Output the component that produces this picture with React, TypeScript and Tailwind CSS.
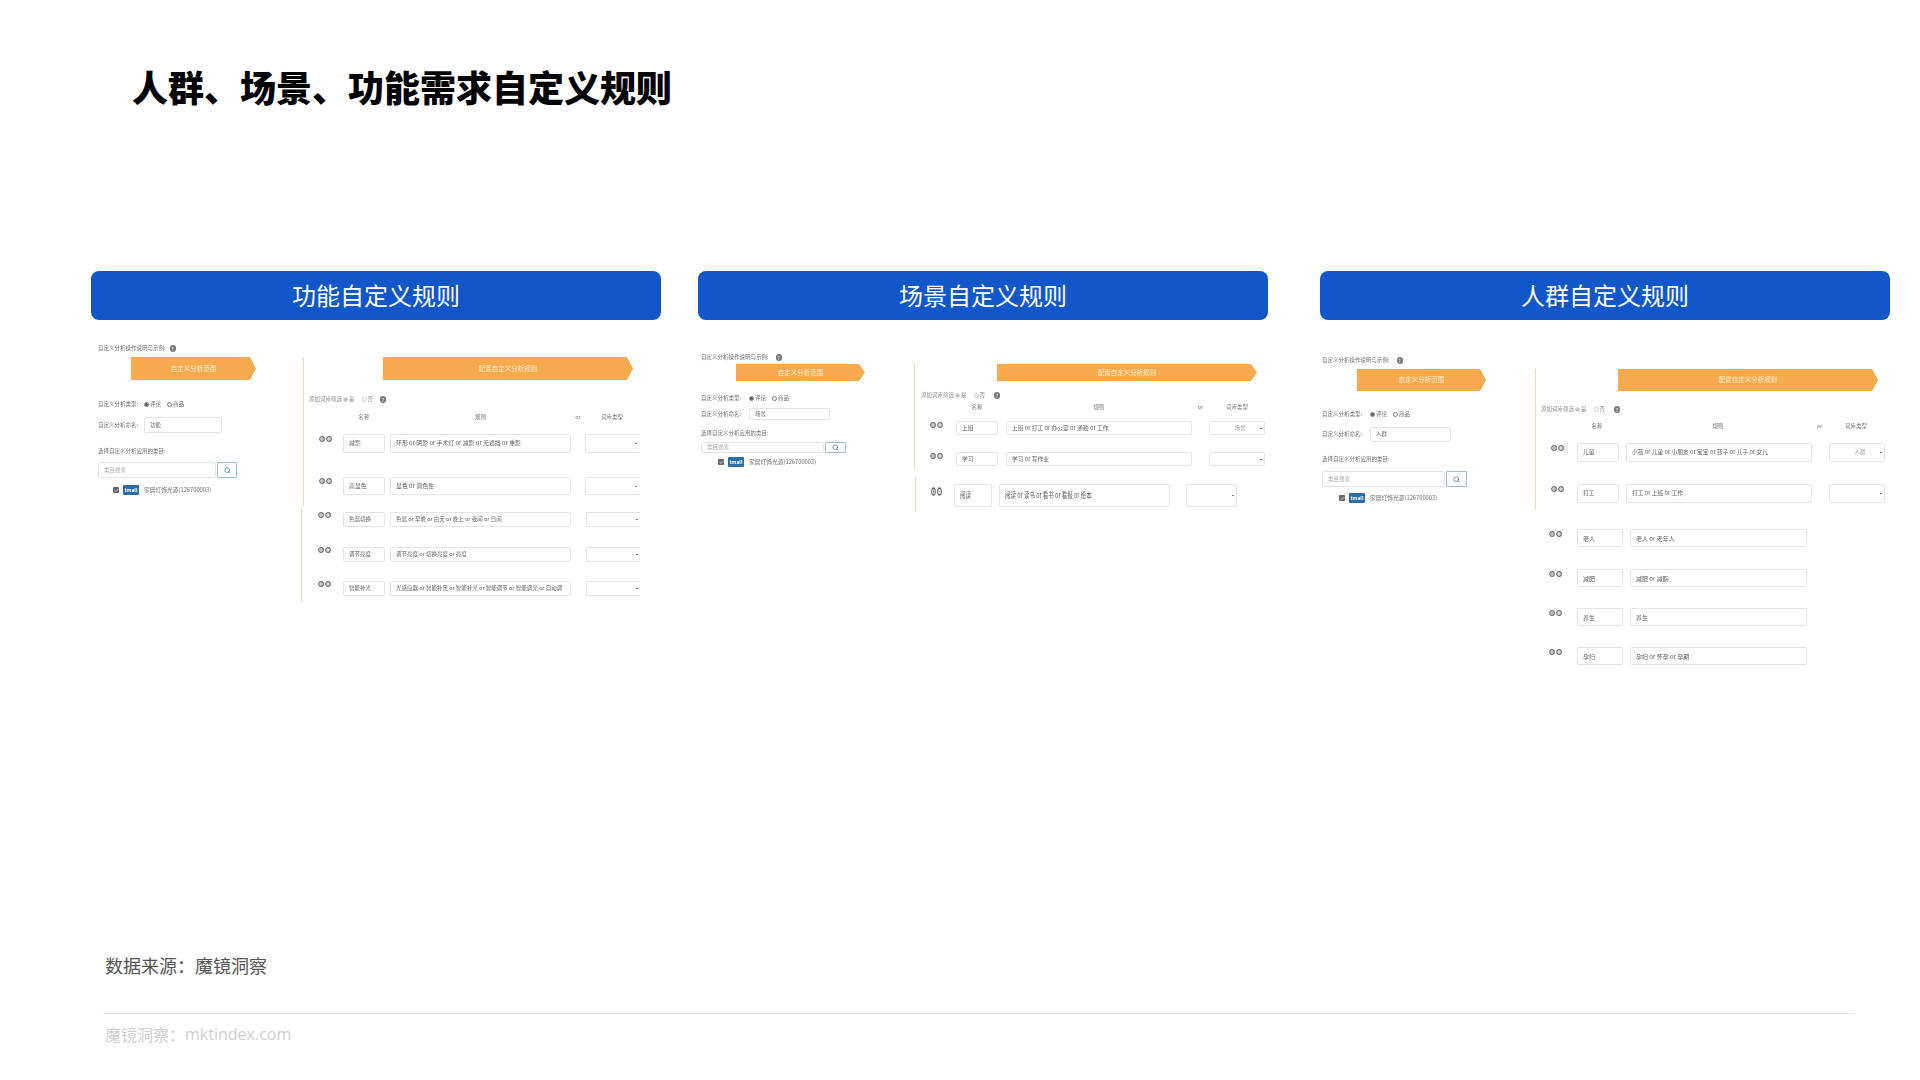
import { Check, Search } from "lucide-react";
import clsx from "clsx";

const CJK = "font-['Noto_Sans_CJK_SC',sans-serif]";

interface RowSizes {
  row: string;
  icons: string;
  name: string;
  rule: string;
  select?: string;
  text: string;
  iconSize?: string;
}

interface RuleRowProps extends RowSizes {
  nameText: string;
  ruleText: string;
  value?: string;
}

function CircleButton({ minus, size }: { minus?: boolean; size: string }) {
  return (
    <svg viewBox="0 0 12 12" preserveAspectRatio="none" className={clsx("block shrink-0", size)}>
      <circle cx="6" cy="6" r="4.6" fill="#fff" stroke="#6e6e6e" strokeWidth="2.4" />
      <path d={minus ? "M3.5 6h5" : "M3.5 6h5M6 3.5v5"} stroke="#888" strokeWidth="1.2" />
    </svg>
  );
}

function Help({ className }: { className?: string }) {
  return (
    <span
      className={clsx(
        "flex h-[7px] w-[6px] shrink-0 items-center justify-center rounded-full bg-[#7a7a7a] text-[5px] leading-none text-white",
        className,
      )}
    >
      ?
    </span>
  );
}

function Radio({ on, light }: { on?: boolean; light?: boolean }) {
  return (
    <span
      className={clsx(
        "flex h-[5px] w-[5px] shrink-0 items-center justify-center rounded-full border-[0.75px]",
        light ? "border-[#ccc]" : "border-[#777]",
      )}
    >
      {on && <span className={clsx("h-[3px] w-[3px] rounded-full", light ? "bg-[#bbb]" : "bg-[#555]")} />}
    </span>
  );
}

function Arrow({ text, className }: { text: string; className: string }) {
  return (
    <div
      className={clsx(
        "flex items-center justify-center bg-[#f6a94d] text-[6.5px] text-[#fdeacf] [clip-path:polygon(0_0,calc(100%-6px)_0,100%_50%,calc(100%-6px)_100%,0_100%)]",
        className,
      )}
    >
      {text}
    </div>
  );
}

function Box({ className, children }: { className: string; children?: React.ReactNode }) {
  return (
    <div
      className={clsx(
        "flex h-full shrink-0 items-center overflow-hidden rounded-[2px] border-[0.75px] border-[#e4e4e4] pl-[5px] whitespace-nowrap",
        className,
      )}
    >
      {children}
    </div>
  );
}

function RuleRow({ row, icons, name, rule, select, text, iconSize, nameText, ruleText, value }: RuleRowProps) {
  return (
    <div className={clsx("flex text-[#5c5c5c]", row)}>
      <div className={clsx("flex shrink-0 gap-[1px]", icons)}>
        <CircleButton size={iconSize ?? "h-[6px] w-[6px]"} />
        <CircleButton size={iconSize ?? "h-[6px] w-[6px]"} minus />
      </div>
      <Box className={name}>
        <span className={clsx("inline-block", text)}>{nameText}</span>
      </Box>
      <Box className={rule}>
        <span className={clsx("inline-block", text)}>{ruleText}</span>
      </Box>
      {select && (
        <Box className={clsx("justify-between pr-[2px] text-[5.5px]", select)}>
          <span className="w-[2px]" />
          <span className="pl-[3px] text-[#999]">{value}</span>
          <span className="h-[1px] w-[2px] bg-[#777]" />
        </Box>
      )}
    </div>
  );
}

function FilterRow({ className, help }: { className: string; help: string }) {
  return (
    <div className={clsx("flex h-[12px] items-center text-[5.5px] text-[#8c8c8c]", className)}>
      <span>添加词库筛选</span>
      <span className="ml-[1px]">
        <Radio on light />
      </span>
      <span className="ml-[1px]">是</span>
      <span className="ml-[7px]">
        <Radio light />
      </span>
      <span className="ml-[1px]">否</span>
      <Help className={help} />
    </div>
  );
}

function ColumnHeads({ className, cols }: { className?: string; cols: string[] }) {
  const labels = ["名称", "规则", "or", "词库类型"];
  return (
    <div className={clsx("flex h-[12px] items-center text-[5.5px] text-[#777]", className)}>
      {labels.map((label, i) => (
        <span key={label} className={clsx("shrink-0 text-center", cols[i])}>
          {label}
        </span>
      ))}
    </div>
  );
}

interface ScopeProps {
  width: string;
  labelW: string;
  name: string;
  arrow: string;
  help: string;
  typeRow: string;
  nameRow: string;
  nameInput: string;
  catRow: string;
  searchRow: string;
  search: string;
  button: string;
  checkRow: string;
}

function ScopeForm(p: ScopeProps) {
  return (
    <div className={clsx("shrink-0 text-[5.5px] text-[#6e6e6e]", p.width)}>
      <div className="flex h-[12px] items-center">
        <span>自定义分析操作说明与示例:</span>
        <Help className={p.help} />
      </div>
      <Arrow text="自定义分析范围" className={p.arrow} />
      <div className={clsx("flex h-[12px] items-center", p.typeRow)}>
        <span className={clsx("shrink-0", p.labelW)}>自定义分析类型:</span>
        <Radio on />
        <span className="ml-[1px] w-[17px]">评论</span>
        <Radio />
        <span className="ml-[1px]">商品</span>
      </div>
      <div className={clsx("flex items-center", p.nameRow)}>
        <span className={clsx("shrink-0", p.labelW)}>自定义分析命名:</span>
        <Box className={p.nameInput}>{p.name}</Box>
      </div>
      <div className={clsx("flex h-[12px] items-center", p.catRow)}>选择自定义分析应用的类目:</div>
      <div className={clsx("flex gap-[1px]", p.searchRow)}>
        <Box className={clsx("text-[#aaa]", p.search)}>类目搜索</Box>
        <div
          className={clsx(
            "flex h-full items-center justify-center rounded-[1px] border-[0.75px] border-[#9dbfcb] text-[#44707f]",
            p.button,
          )}
        >
          <Search size={7} strokeWidth={2.4} />
        </div>
      </div>
      <div className={clsx("flex items-center", p.checkRow)}>
        <span className="flex h-[6px] w-[6px] shrink-0 items-center justify-center rounded-[1px] bg-[#666]">
          <Check size={5} strokeWidth={3} className="text-white" />
        </span>
        <span className="ml-[4px] flex h-full w-[16px] shrink-0 items-center justify-center rounded-[1px] bg-[#2a6ea8] text-[5px] font-bold text-white">
          tmall
        </span>
        <span className="ml-[5px] text-[5.75px] whitespace-nowrap">家居灯饰光源(126700003)</span>
      </div>
    </div>
  );
}

function FeaturePanel() {
  const upper = {
    icons: "ml-[16px]",
    name: "ml-[11px] w-[42px]",
    rule: "ml-[5px] w-[181px]",
    select: "ml-[14px] w-[54px] border-r-0 rounded-r-none",
    text: "text-[5.9px]",
  };
  const lower = {
    icons: "ml-[16px]",
    name: "ml-[12px] w-[42px]",
    rule: "ml-[5px] w-[181px]",
    select: "ml-[15px] w-[54px] border-r-0 rounded-r-none",
    text: "text-[5.5px]",
  };
  return (
    <div className="flex pl-[7px] pt-[22px] blur-[0.3px]">
      <ScopeForm
        width="w-[205px]"
        labelW="w-[46px]"
        name="功能"
        help="ml-[4px]"
        arrow="ml-[33px] mt-[3px] h-[23px] w-[125px]"
        typeRow="mt-[18px]"
        nameRow="mt-[7px] h-[16px]"
        nameInput="w-[78px]"
        catRow="mt-[12px]"
        searchRow="mt-[5px] h-[16px]"
        search="w-[118px]"
        button="w-[20px]"
        checkRow="mt-[7px] h-[10px] pl-[15px]"
      />
      <div className="mt-[15px]">
        <div className="border-l-[1.5px] border-[#f5d9ae] pb-[11px]">
          <Arrow text="配置自定义分析规则" className="ml-[79px] h-[23px] w-[250px]" />
          <FilterRow className="ml-[5px] mt-[13px]" help="ml-[7px]" />
          <ColumnHeads
            className="mt-[6px]"
            cols={["ml-[39px] w-[42px]", "ml-[5px] w-[181px]", "w-[14px]", "w-[54px]"]}
          />
          <RuleRow
            {...upper}
            row="mt-[11px] h-[19px]"
            icons="ml-[15px] mt-[2px]"
            nameText="减影"
            ruleText="环形 or 阴影 or 手术灯 or 减影 or 无遮挡 or 重影"
          />
          <RuleRow
            {...upper}
            row="mt-[24px] h-[18px]"
            icons="ml-[15px] mt-[1px]"
            nameText="高显色"
            ruleText="显色 or 调色性"
          />
        </div>
        <div className="-ml-[2px] mt-[2px] border-l-[1.5px] border-[#f5d9ae] pb-[6px] pt-[4px]">
          <RuleRow {...lower} row="h-[15px]" nameText="色温切换" ruleText="色温 or 早晚 or 白天 or 晚上 or 夜间 or 日间" />
          <RuleRow {...lower} row="mt-[20px] h-[15px]" nameText="调节亮度" ruleText="调节亮度 or 切换亮度 or 亮度" />
          <RuleRow
            {...lower}
            row="mt-[19px] h-[15px]"
            nameText="智能补光"
            ruleText="光感应器 or 智能补足 or 智能补光 or 智能调节 or 智能调光 or 自动调"
          />
        </div>
      </div>
    </div>
  );
}

function ScenePanel() {
  const upper = {
    icons: "ml-[16px]",
    name: "ml-[13px] w-[42px]",
    rule: "ml-[8px] w-[186px]",
    select: "ml-[17px] w-[56px]",
    text: "text-[5.75px]",
  };
  return (
    <div className="flex pl-[3px] pt-[31px] blur-[0.3px]">
      <ScopeForm
        width="w-[213px]"
        labelW="w-[48px]"
        name="场景"
        help="ml-[7px]"
        arrow="ml-[35px] mt-[1px] h-[17px] w-[129px]"
        typeRow="mt-[11px]"
        nameRow="mt-[4px] h-[12px]"
        nameInput="w-[81px]"
        catRow="mt-[7px]"
        searchRow="mt-[3px] h-[11px]"
        search="w-[123px]"
        button="w-[21px]"
        checkRow="mt-[4px] h-[10px] pl-[17px]"
      />
      <div className="mt-[13px]">
        <div className="border-l-[1.5px] border-[#f5d9ae] pb-[4px]">
          <Arrow text="配置自定义分析规则" className="ml-[82px] h-[17px] w-[260px]" />
          <FilterRow className="ml-[6px] mt-[8px]" help="ml-[9px]" />
          <ColumnHeads cols={["ml-[41px] w-[42px]", "ml-[8px] w-[186px]", "w-[17px]", "w-[56px]"]} />
          <RuleRow
            {...upper}
            row="mt-[8px] h-[14px]"
            icons="ml-[15px] mt-[1px]"
            nameText="上班"
            ruleText="上班 or 打工 or 办公室 or 通勤 or 工作"
            value="场景"
          />
          <RuleRow
            {...upper}
            row="mt-[17px] h-[14px]"
            icons="ml-[15px] mt-[1px]"
            nameText="学习"
            ruleText="学习 or 写作业"
          />
        </div>
        <div className="ml-[1px] mt-[7px] border-l-[1.5px] border-[#ecd3a8] pb-[5px] pt-[7px]">
          <RuleRow
            row="h-[23px]"
            icons="ml-[15px] mt-[3px]"
            iconSize="h-[9px] w-[5px]"
            name="ml-[12px] w-[38px]"
            rule="ml-[7px] w-[171px]"
            select="ml-[16px] w-[51px]"
            text="text-[5.5px] scale-y-150"
            nameText="阅读"
            ruleText="阅读 or 读书 or 看书 or 看报 or 绘本"
          />
        </div>
      </div>
    </div>
  );
}

function AudiencePanel() {
  const upper = {
    icons: "ml-[15px]",
    name: "ml-[13px] w-[42px]",
    rule: "ml-[7px] w-[186px]",
    select: "ml-[17px] w-[56px]",
    text: "text-[5.75px]",
  };
  const lower = {
    icons: "ml-[14px] mt-[2px]",
    name: "ml-[15px] w-[46px]",
    rule: "ml-[7px] w-[177px]",
    text: "text-[6px]",
  };
  return (
    <div className="flex pl-[2px] pt-[34px] blur-[0.3px]">
      <ScopeForm
        width="w-[213px]"
        labelW="w-[48px]"
        name="人群"
        help="ml-[7px]"
        arrow="ml-[35px] mt-[3px] h-[22px] w-[129px]"
        typeRow="mt-[17px]"
        nameRow="mt-[7px] h-[15px]"
        nameInput="w-[81px]"
        catRow="mt-[11px]"
        searchRow="mt-[6px] h-[16px]"
        search="w-[123px]"
        button="w-[21px]"
        checkRow="mt-[6px] h-[10px] pl-[17px]"
      />
      <div className="mt-[15px]">
        <div className="border-l-[1.5px] border-[#f5d9ae] pb-[7px]">
          <Arrow text="配置自定义分析规则" className="ml-[82px] h-[22px] w-[260px]" />
          <FilterRow className="ml-[5px] mt-[12px]" help="ml-[9px]" />
          <ColumnHeads
            className="mt-[5px]"
            cols={["ml-[40px] w-[42px]", "ml-[7px] w-[186px]", "w-[17px]", "w-[56px]"]}
          />
          <RuleRow
            {...upper}
            row="mt-[11px] h-[19px]"
            icons="ml-[15px] mt-[2px]"
            nameText="儿童"
            ruleText="小孩 or 儿童 or 小朋友 or 宝宝 or 孩子 or 儿子 or 女儿"
            value="人群"
          />
          <RuleRow
            {...upper}
            row="mt-[22px] h-[19px]"
            icons="ml-[15px] mt-[2px]"
            nameText="打工"
            ruleText="打工 or 上班 or 工作"
          />
        </div>
        <RuleRow {...lower} row="mt-[19px] h-[18px]" nameText="老人" ruleText="老人 or 老年人" />
        <RuleRow {...lower} row="mt-[22px] h-[18px]" nameText="减肥" ruleText="减肥 or 减脂" />
        <RuleRow {...lower} row="mt-[21px] h-[18px]" nameText="养生" ruleText="养生" />
        <RuleRow {...lower} row="mt-[21px] h-[18px]" nameText="孕妇" ruleText="孕妇 or 怀孕 or 孕期" />
      </div>
    </div>
  );
}

function ColumnTitle({ children }: { children: React.ReactNode }) {
  return (
    <div className="flex h-[49px] items-center justify-center rounded-[8px] bg-[#1257c9] pb-[2px] text-[24px] text-white">
      {children}
    </div>
  );
}

export default function App() {
  return (
    <div className={clsx("flex h-[1080px] w-[1920px] flex-col overflow-hidden bg-white", CJK)}>
      <h1 className="pl-[132px] pt-[64px] text-[36px] leading-[44px] font-black text-black">
        人群、场景、功能需求自定义规则
      </h1>
      <div className="ml-[91px] mt-[163px] flex">
        <div className="w-[570px]">
          <ColumnTitle>功能自定义规则</ColumnTitle>
          <FeaturePanel />
        </div>
        <div className="ml-[37px] w-[570px]">
          <ColumnTitle>场景自定义规则</ColumnTitle>
          <ScenePanel />
        </div>
        <div className="ml-[52px] w-[570px]">
          <ColumnTitle>人群自定义规则</ColumnTitle>
          <AudiencePanel />
        </div>
      </div>
      <div className="mt-auto">
        <p className="pl-[105px] text-[18px] leading-[28px] text-[#555]">数据来源：魔镜洞察</p>
        <div className="ml-[103px] mt-[34px] h-px w-[1752px] bg-[#e8e8e8]" />
        <p className="flex h-[26px] items-center mb-[33px] pl-[105px] mt-[7px] text-[16px] leading-[26px] text-[#cfcfcf]">
          魔镜洞察：<span className="font-['Open_Sans',sans-serif]">mktindex.com</span>
        </p>
      </div>
    </div>
  );
}
